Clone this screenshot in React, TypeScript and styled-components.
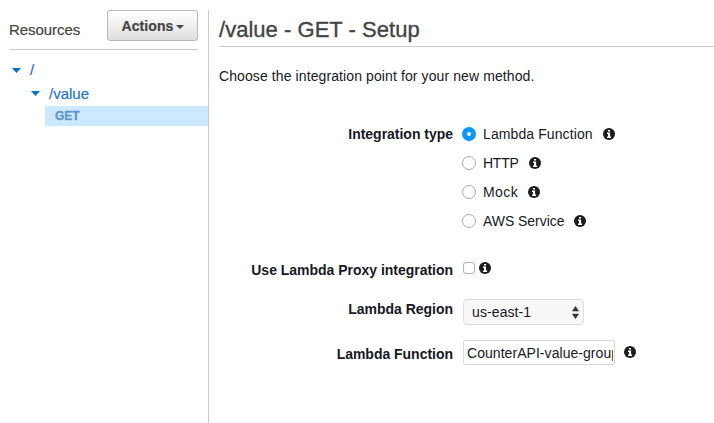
import React from "react";
import styled, { createGlobalStyle } from "styled-components";

const GlobalStyle = createGlobalStyle`
  * { box-sizing: border-box; }
  body {
    margin: 0;
    background: #fff;
    color: #16191f;
    font: 14px/20px "Liberation Sans", Arial, sans-serif;
    overflow: hidden;
  }
`;

const Page = styled.div`
  display: flex;
  height: 423px;
  padding-top: 10px;
`;

const Sidebar = styled.aside`
  flex: none;
  width: 209px;
  border-right: 1px solid #ccc;
`;

const SidebarHeader = styled.header`
  display: flex;
  justify-content: space-between;
  height: 40px;
  margin: 0 10px 0 9px;
  border-bottom: 1px solid #ccc;
`;

const SidebarTitle = styled.span`
  margin-top: 10px;
  color: #444;
  font-size: 15px;
  letter-spacing: -0.05px;
  -webkit-text-stroke: 0.2px #444;
`;

const ActionsButton = styled.button`
  display: flex;
  align-items: center;
  justify-content: center;
  gap: 2px;
  width: 91px;
  height: 31px;
  padding: 0;
  border: 1px solid #b8b8b8;
  border-radius: 3px;
  background: linear-gradient(#fff, #dedede);
  color: #444;
  font: bold 14px/20px "Liberation Sans", Arial, sans-serif;
  letter-spacing: 0.1px;
  -webkit-text-stroke: 0.2px #444;
`;

const Tree = styled.ul`
  margin: 9px 0 0;
  padding: 0;
  list-style: none;
`;

const TreeRow = styled.li<{ $indent: number; $height: number }>`
  display: flex;
  align-items: center;
  gap: 9px;
  height: ${(p) => p.$height}px;
  padding-left: ${(p) => p.$indent}px;
  color: #1f73bb;
  font-size: 15px;
  -webkit-text-stroke: 0.2px #1f73bb;
`;

const SelectedMethod = styled.li`
  height: 20px;
  margin-left: 45px;
  padding-left: 10px;
  background: #cce9ff;
  color: #5a97c6;
  font-size: 12px;
  font-weight: bold;
  letter-spacing: -0.1px;
  -webkit-text-stroke: 0.3px #5a97c6;
`;

const Main = styled.main`
  flex: 1;
  min-width: 0;
  padding-left: 10px;
`;

const Title = styled.h1`
  height: 37px;
  margin: 0;
  padding-top: 5px;
  border-bottom: 1px solid #ccc;
  color: #444;
  font-size: 22px;
  font-weight: normal;
  line-height: 30px;
  letter-spacing: 0.03px;
  -webkit-text-stroke: 0.35px #444;
`;

const Intro = styled.p`
  margin: 19px 0 38px;
  letter-spacing: 0.1px;
`;

const FormRow = styled.div<{ $gap: number }>`
  display: flex;
  align-items: flex-start;
  margin-bottom: ${(p) => p.$gap}px;
`;

const Label = styled.span`
  width: 234px;
  margin-right: 10px;
  text-align: right;
  font-weight: bold;
  white-space: nowrap;
  letter-spacing: -0.02px;
`;

const Options = styled.div`
  display: flex;
  flex-direction: column;
  gap: 9px;
  margin-left: -1px;
`;

const Option = styled.label`
  display: flex;
  align-items: center;
  height: 20px;
`;

const OptionText = styled.span<{ $spacing: number }>`
  margin: 0 10px 0 7px;
  letter-spacing: ${(p) => p.$spacing}px;
`;

const Radio = styled.span<{ $checked: boolean }>`
  width: 14px;
  height: 14px;
  border: ${(p) => (p.$checked ? "5px solid #0a98fb" : "1px solid #aaa")};
  border-radius: 50%;
  background: #fff;
`;

const CheckGroup = styled.div`
  display: flex;
  gap: 4px;
  padding-top: 2px;
`;

const Checkbox = styled.span`
  width: 12px;
  height: 12px;
  border: 1px solid #b0b0b0;
  border-radius: 3px;
  background: #fff;
`;

const Select = styled.div`
  display: flex;
  justify-content: space-between;
  width: 121px;
  height: 26px;
  padding: 2px 4px 0 8px;
  border: 1px solid #dcdcdc;
  border-radius: 4px;
  background: #f7f7f7;
  letter-spacing: 0.1px;
`;

const TextField = styled.div`
  width: 152px;
  height: 25px;
  margin: -4px 9px 0 0;
  padding: 2px 0 0 3px;
  border: 1px solid #d9d9d9;
  border-radius: 2px;
  background: #fff;
`;

const FieldValue = styled.div`
  width: 146px;
  overflow: hidden;
  white-space: nowrap;
  letter-spacing: 0.05px;
`;

const Icon = styled.svg<{ $top?: number }>`
  display: block;
  flex: none;
  margin-top: ${(p) => p.$top ?? 0}px;
`;

const Info = ({ top }: { top?: number }) => (
  <Icon $top={top} width="12" height="12" viewBox="0 0 12 12">
    <circle cx="6" cy="6" r="6" fill="#1c1c1c" />
    <path d="M5 1.9h2.1v1.7H5zM4 4.5h3.1v4h1V10H4V8.5h1V6H4z" fill="#fff" />
  </Icon>
);

const Caret = () => (
  <Icon width="9" height="5" viewBox="0 0 9 5">
    <path d="M0 0h9L4.5 5z" fill="#0073c7" />
  </Icon>
);

const options = [
  { name: "Lambda Function", spacing: 0.1 },
  { name: "HTTP", spacing: -0.25 },
  { name: "Mock", spacing: 0.45 },
  { name: "AWS Service", spacing: -0.05 },
];

export default function App() {
  return (
    <>
      <GlobalStyle />
      <Page>
        <Sidebar>
          <SidebarHeader>
            <SidebarTitle>Resources</SidebarTitle>
            <ActionsButton>
              Actions
              <Icon $top={2} width="8" height="4" viewBox="0 0 8 4">
                <path d="M0 0h8L4 4z" fill="#444" />
              </Icon>
            </ActionsButton>
          </SidebarHeader>
          <Tree>
            <TreeRow $indent={12} $height={22}><Caret />/</TreeRow>
            <TreeRow $indent={31} $height={25}><Caret />/value</TreeRow>
            <SelectedMethod>GET</SelectedMethod>
          </Tree>
        </Sidebar>
        <Main>
          <Title>/value - GET - Setup</Title>
          <Intro>Choose the integration point for your new method.</Intro>
          <FormRow $gap={29}>
            <Label>Integration type</Label>
            <Options>
              {options.map((o, i) => (
                <Option key={o.name}>
                  <Radio $checked={i === 0} />
                  <OptionText $spacing={o.spacing}>{o.name}</OptionText>
                  <Info />
                </Option>
              ))}
            </Options>
          </FormRow>
          <FormRow $gap={19}>
            <Label>Use Lambda Proxy integration</Label>
            <CheckGroup><Checkbox /><Info /></CheckGroup>
          </FormRow>
          <FormRow $gap={19}>
            <Label>Lambda Region</Label>
            <Select>
              us-east-1
              <Icon $top={4} width="7" height="13" viewBox="0 0 7 13">
                <path d="M0 5.3L3.5 0 7 5.3zM0 7.7h7L3.5 13z" fill="#333" />
              </Icon>
            </Select>
          </FormRow>
          <FormRow $gap={0}>
            <Label>Lambda Function</Label>
            <TextField><FieldValue>CounterAPI-value-group</FieldValue></TextField>
            <Info top={2} />
          </FormRow>
        </Main>
      </Page>
    </>
  );
}
